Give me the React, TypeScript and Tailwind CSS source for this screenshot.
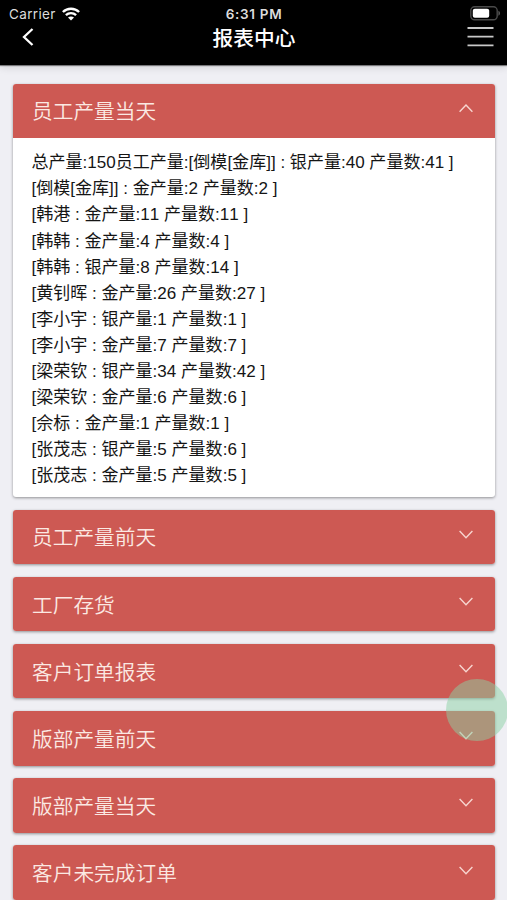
const FONT =
  "font-['Liberation_Sans','Noto_Sans_CJK_SC',sans-serif]"

const records = [
  '总产量:150员工产量:[倒模[金库]] : 银产量:40 产量数:41 ]',
  '[倒模[金库]] : 金产量:2 产量数:2 ]',
  '[韩港 : 金产量:11 产量数:11 ]',
  '[韩韩 : 金产量:4 产量数:4 ]',
  '[韩韩 : 银产量:8 产量数:14 ]',
  '[黄钊晖 : 金产量:26 产量数:27 ]',
  '[李小宇 : 银产量:1 产量数:1 ]',
  '[李小宇 : 金产量:7 产量数:7 ]',
  '[梁荣钦 : 银产量:34 产量数:42 ]',
  '[梁荣钦 : 金产量:6 产量数:6 ]',
  '[佘标 : 金产量:1 产量数:1 ]',
  '[张茂志 : 银产量:5 产量数:6 ]',
  '[张茂志 : 金产量:5 产量数:5 ]',
]

const sections: { title: string; lines?: string[] }[] = [
  { title: '员工产量当天', lines: records },
  { title: '员工产量前天' },
  { title: '工厂存货' },
  { title: '客户订单报表' },
  { title: '版部产量前天' },
  { title: '版部产量当天' },
  { title: '客户未完成订单' },
]

function StatusBar() {
  return (
    <div className="grid h-[26px] grid-cols-3 items-center pl-[9px] pr-[8px] text-[#dcdcdc]">
      <div className="flex items-center gap-[6px]">
        <span className="pt-px font-['Inter',sans-serif] text-[13.5px] leading-[26px] tracking-[0.35px]">Carrier</span>
        <svg width="18" height="14" viewBox="0 0 18 14" fill="none" stroke="#fff" strokeWidth="2.4">
          <path d="M0.9 5C5.4 0.6 12.6 0.6 17.1 5" />
          <path d="M3.9 8.2C6.8 5.4 11.2 5.4 14.1 8.2" />
          <path d="M9 13.6L6 10.6C7.7 9 10.3 9 12 10.6Z" fill="#fff" stroke="none" />
        </svg>
      </div>
      <span className="whitespace-nowrap pt-px text-center font-['Inter',sans-serif] text-[13.5px] font-semibold leading-[26px] tracking-[0.7px]">
        6:31 PM
      </span>
      <svg className="-mr-[2px] justify-self-end" width="31" height="15" viewBox="0 0 31 15" fill="none">
        <rect x="0.8" y="0.8" width="26.4" height="13" rx="3.8" stroke="#4a4a4a" strokeWidth="1.4" />
        <rect x="2.8" y="2.8" width="16.4" height="9" rx="2" fill="#fff" />
        <path d="M28.4 4.8C30.6 5.8 30.6 8.8 28.4 9.8Z" fill="#555" />
      </svg>
    </div>
  )
}

function Header() {
  return (
    <header className="h-[65px] shrink-0 bg-black shadow-[0_1px_1px_rgba(0,0,0,0.45),0_2px_8px_rgba(0,0,0,0.14)]">
      <StatusBar />
      <div className="flex h-[22px] items-center justify-between pl-[22px] pr-[13px]">
        <svg width="12" height="18" viewBox="0 0 12 18" fill="none" stroke="#fff" strokeWidth="2.3">
          <path d="M10.5 1L2 9L10.5 17" />
        </svg>
        <h1 className="pl-[7px] pt-[4px] text-[20.7px] font-medium leading-[24px] text-white">报表中心</h1>
        <svg width="27" height="22" viewBox="0 0 27 22" stroke="#c8c8c8" strokeWidth="1.8">
          <path d="M0.5 2H26.5M0.5 10.6H26.5M0.5 19.4H26.5" />
        </svg>
      </div>
    </header>
  )
}

function Chevron({ open }: { open: boolean }) {
  return (
    <svg className="mb-[5px]" width="14" height="9" viewBox="0 0 14 9" fill="none" stroke="#f7d5cf" strokeWidth="1.4">
      <path d={open ? 'M0.6 7.8L7 1L13.4 7.8' : 'M0.6 1L7 7.8L13.4 1'} />
    </svg>
  )
}

function Section({ title, lines }: { title: string; lines?: string[] }) {
  return (
    <section className="shrink-0 overflow-hidden rounded-[3px] bg-white shadow-[0_1px_3px_rgba(0,0,0,0.4)]">
      <div className="flex h-[54.5px] items-center justify-between bg-[#cd5953] pl-[19px] pr-[22px]">
        <h2 className="pt-[3px] text-[20.7px] font-[350] leading-[30px] text-[#fbe9e3]">{title}</h2>
        <Chevron open={!!lines} />
      </div>
      {lines && (
        <div className="h-[359px] pl-[18.5px] pt-[12.3px] text-[17.05px] leading-[26.1px] text-[#151515] [font-kerning:none]">
          {lines.map((line) => (
            <p key={line} className="whitespace-nowrap">{line}</p>
          ))}
        </div>
      )}
    </section>
  )
}

export default function App() {
  return (
    <div className={`relative flex h-[900px] w-[507px] flex-col overflow-hidden bg-[#efeff4] ${FONT}`}>
      <Header />
      <main className="flex flex-col gap-[12.65px] pl-[13px] pr-[12px] pt-[18.5px]">
        {sections.map((section) => (
          <Section key={section.title} {...section} />
        ))}
      </main>
      {/* floating assistive button */}
      <div className="absolute left-[446px] top-[679px] size-[61.5px] rounded-full bg-[#8bd2a4]/50" />
    </div>
  )
}
